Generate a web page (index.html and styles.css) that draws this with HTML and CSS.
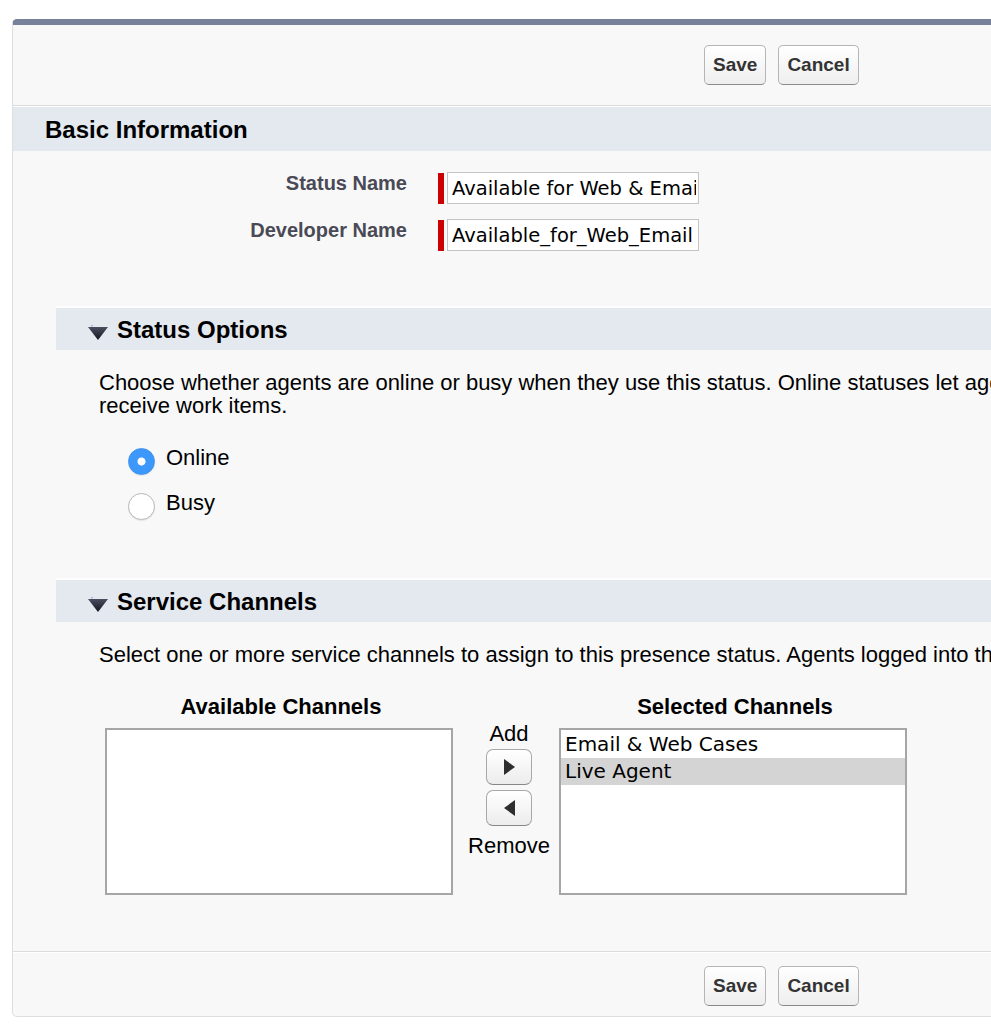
FILE: index.html
```html
<!DOCTYPE html>
<html lang="en">
<head>
  <meta charset="UTF-8">
  <meta name="viewport" content="width=device-width, initial-scale=1.0">
  <title>Presence Status Edit</title>
  <link rel="stylesheet" href="styles.css">
</head>
<body>

  <form class="page-block">

    <!-- Top buttons -->
    <div class="pb-header">
      <button type="button" class="btn">Save</button>
      <button type="button" class="btn">Cancel</button>
    </div>

    <div class="pb-body">
      <h2 class="pb-subheader">Basic Information</h2>

      <div class="field-list">
        <div class="field-row">
          <label class="label-col" for="status-name">Status Name</label>
          <div class="required-input">
            <span class="required-block"></span>
            <input type="text" id="status-name" class="text-input" value="Available for Web &amp; Email">
          </div>
        </div>
        <div class="field-row">
          <label class="label-col" for="developer-name">Developer Name</label>
          <div class="required-input">
            <span class="required-block"></span>
            <input type="text" id="developer-name" class="text-input" value="Available_for_Web_Email">
          </div>
        </div>
      </div>

      <!-- Status Options -->
      <div class="section">
        <h3 class="section-header">
          <svg class="twisty" width="20" height="16" viewBox="0 0 20 16">
            <defs>
              <linearGradient id="tw1" x1="0" y1="0" x2="0" y2="1">
                <stop offset="0" stop-color="#4b4e60"/>
                <stop offset="1" stop-color="#14151e"/>
              </linearGradient>
            </defs>
            <circle cx="4" cy="0.8" r="0.8" fill="#9a9cab"/>
            <polygon points="0,2 20,2 10,15" fill="url(#tw1)"/>
          </svg>
          Status Options
        </h3>
        <div class="section-body">
          <p class="section-text">Choose whether agents are online or busy when they use this status. Online statuses let agents receive work items.</p>
          <div class="radio-list">
            <label class="radio-row"><input type="radio" name="status-type" class="radio" checked>Online</label>
            <label class="radio-row"><input type="radio" name="status-type" class="radio">Busy</label>
          </div>
        </div>
      </div>

      <!-- Service Channels -->
      <div class="section">
        <h3 class="section-header">
          <svg class="twisty" width="20" height="16" viewBox="0 0 20 16">
            <defs>
              <linearGradient id="tw2" x1="0" y1="0" x2="0" y2="1">
                <stop offset="0" stop-color="#4b4e60"/>
                <stop offset="1" stop-color="#14151e"/>
              </linearGradient>
            </defs>
            <circle cx="4" cy="0.8" r="0.8" fill="#9a9cab"/>
            <polygon points="0,2 20,2 10,15" fill="url(#tw2)"/>
          </svg>
          Service Channels
        </h3>
        <div class="section-body">
          <p class="section-text single-line">Select one or more service channels to assign to this presence status. Agents logged into these channels can receive work items.</p>

          <div class="dueling">
            <div class="list-col">
              <div class="list-title">Available Channels</div>
              <div class="list-box" role="listbox"></div>
            </div>

            <div class="list-controls">
              <span>Add</span>
              <button type="button" class="arrow-btn" title="Add">
                <svg width="11" height="16" viewBox="0 0 11 16"><polygon points="0,0 11,8 0,16" fill="#2e2e2e"/></svg>
              </button>
              <button type="button" class="arrow-btn" title="Remove">
                <svg width="11" height="16" viewBox="0 0 11 16"><polygon points="11,0 0,8 11,16" fill="#2e2e2e"/></svg>
              </button>
              <span class="remove-label">Remove</span>
            </div>

            <div class="list-col">
              <div class="list-title">Selected Channels</div>
              <div class="list-box" role="listbox">
                <div class="list-option">Email &amp; Web Cases</div>
                <div class="list-option selected">Live Agent</div>
              </div>
            </div>
          </div>
        </div>
      </div>
    </div>

    <!-- Bottom buttons -->
    <div class="pb-footer">
      <button type="button" class="btn">Save</button>
      <button type="button" class="btn">Cancel</button>
    </div>

  </form>

</body>
</html>
```

FILE: styles.css
```css
html, body {
  margin: 0;
  overflow: hidden;
}

body {
  background-color: #ffffff;
  font-family: 'Liberation Sans', Arial, Helvetica, sans-serif;
  color: #000;
}

.page-block {
  width: 1100px;
  margin: 19px 0 0 12px;
  background-color: #f8f8f8;
  border: 1px solid #dedede;
  border-top: 6px solid #78819a;
  border-radius: 5px;
}

.pb-header {
  display: flex;
  gap: 12px;
  padding: 20px 0 20px 691px;
  border-bottom: 1px solid #dcdcdc;
}

.pb-footer {
  display: flex;
  gap: 12px;
  padding: 14px 0 10px 691px;
  border-top: 1px solid #dcdcdc;
  box-shadow: inset 0 1px 0 #ffffff;
}

.btn {
  height: 40px;
  padding: 0 8px;
  font-family: 'Liberation Sans', Arial, sans-serif;
  font-size: 19px;
  font-weight: bold;
  color: #333;
  background: linear-gradient(#ffffff, #eeeeee);
  border: 1px solid #b5b5b5;
  border-bottom-color: #8a8a8a;
  border-radius: 5px;
  cursor: pointer;
}

.pb-body {
  padding-bottom: 56px;
}

.pb-subheader {
  margin: 0;
  padding: 9px 0 7px 32px;
  border-top: 1px solid #ffffff;
  background-color: #e4e8ef;
  font-size: 24px;
  line-height: 28px;
  font-weight: bold;
}

/* Basic information fields */
.field-list {
  display: flex;
  flex-direction: column;
  gap: 15px;
  padding-top: 21px;
}

.field-row {
  display: flex;
  align-items: flex-start;
}

.label-col {
  width: 394px;
  text-align: right;
  font-size: 20px;
  line-height: 23px;
  font-weight: bold;
  color: #4a4a56;
}

.required-input {
  display: flex;
  gap: 3px;
  margin-left: 31px;
}

.required-block {
  width: 6px;
  height: 31px;
  margin-top: 1px;
  background-color: #c00;
}

.text-input {
  width: 252px;
  height: 32px;
  box-sizing: border-box;
  margin: 0;
  padding: 0 2px 0 4px;
  border: 1px solid #c4c4c4;
  border-radius: 0;
  background: #fff;
  font-family: 'DejaVu Sans', sans-serif;
  font-size: 19.5px;
  color: #000;
  outline: none;
}

/* Sub sections */
.section {
  margin: 55px 0 0 43px;
}

.section-header {
  display: flex;
  align-items: center;
  height: 40px;
  margin: 0;
  padding: 2px 0 0 32px;
  border-top: 2px solid #ffffff;
  background-color: #e4e8ef;
  font-size: 24px;
  line-height: 28px;
  font-weight: bold;
}

.twisty {
  flex: none;
  margin: 6px 9px 0 0;
}

.section-body {
  padding: 0 40px 0 43px;
}

.section-text {
  margin: 21px 0 0;
  font-size: 22px;
  line-height: 23px;
}

.single-line {
  white-space: nowrap;
}

.radio-list {
  display: flex;
  flex-direction: column;
  gap: 16px;
  margin-top: 29px;
  padding-bottom: 3px;
}

.radio-row {
  display: flex;
  align-items: flex-start;
  gap: 11px;
  padding-left: 29px;
  font-size: 22px;
  line-height: 23px;
}

.radio {
  appearance: none;
  -webkit-appearance: none;
  flex: none;
  width: 27px;
  height: 27px;
  margin: 2px 0 0;
  border: 1px solid #b8b8b8;
  border-radius: 50%;
  background-color: #ffffff;
  box-shadow: 0 1px 1px rgba(0, 0, 0, 0.08);
}

.radio:checked {
  border-color: #3a8fec;
  background: radial-gradient(circle, #ffffff 0 3.5px, #3d98fb 4.5px);
}

/* Dueling list boxes */
.dueling {
  display: flex;
  align-items: flex-start;
  margin: 29px 0 0 6px;
}

.list-col {
  width: 348px;
  flex: none;
}

.list-title {
  margin-bottom: 10px;
  padding-left: 4px;
  text-align: center;
  font-size: 22px;
  line-height: 23px;
  font-weight: bold;
}

.list-box {
  height: 167px;
  box-sizing: border-box;
  padding-top: 1px;
  border: 2px solid #a6a6a6;
  background-color: #ffffff;
  font-family: 'DejaVu Sans', sans-serif;
  font-size: 20px;
}

.list-option {
  padding: 0 4px;
  line-height: 27px;
  white-space: nowrap;
}

.list-option.selected {
  background-color: #d4d4d4;
}

.list-controls {
  flex: none;
  width: 80px;
  margin: 27px 10px 0 16px;
  display: flex;
  flex-direction: column;
  align-items: center;
  font-size: 22px;
  line-height: 23px;
}

.arrow-btn {
  display: flex;
  align-items: center;
  justify-content: center;
  width: 46px;
  height: 36px;
  margin-top: 4px;
  padding: 0;
  background: linear-gradient(#ffffff, #ececec);
  border: 1px solid #a8a8a8;
  border-bottom-color: #878787;
  border-radius: 7px;
  cursor: pointer;
}

.arrow-btn + .arrow-btn {
  margin-top: 5px;
}

.remove-label {
  margin-top: 8px;
}
```
